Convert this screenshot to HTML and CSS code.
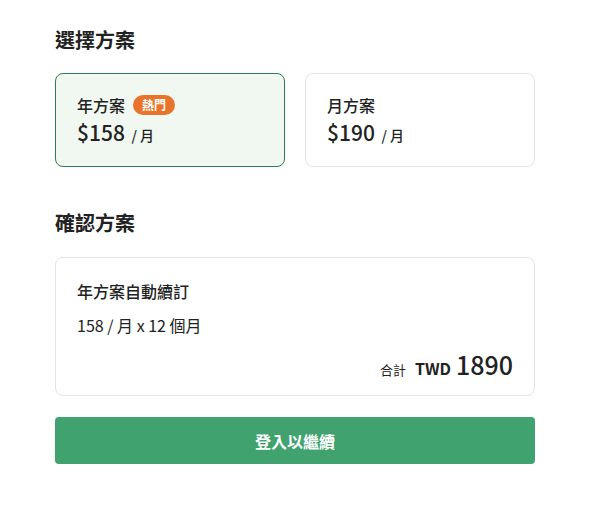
FILE: index.html
```html
<!DOCTYPE html>
<html lang="zh-Hant">
<head>
<meta charset="utf-8">
<link rel="stylesheet" href="styles.css">
</head>
<body>
<main class="page">
  <h2 class="section-title">選擇方案</h2>
  <div class="plans">
    <div class="plan selected">
      <div class="plan-name">年方案 <span class="badge">熱門</span></div>
      <div class="plan-price"><span class="amount">$158</span> <span class="unit">/ 月</span></div>
    </div>
    <div class="plan">
      <div class="plan-name">月方案</div>
      <div class="plan-price"><span class="amount">$190</span> <span class="unit">/ 月</span></div>
    </div>
  </div>

  <h2 class="section-title second">確認方案</h2>
  <div class="summary">
    <div class="summary-title">年方案自動續訂</div>
    <div class="summary-detail">158 / 月 x 12 個月</div>
    <div class="summary-total">
      <span class="total-label">合計</span>
      <span class="currency">TWD</span>
      <span class="total-amount">1890</span>
    </div>
  </div>

  <button class="cta">登入以繼續</button>
</main>
</body>
</html>
```
FILE: styles.css
```css
* { box-sizing: border-box; }
html, body { margin: 0; padding: 0; background: #fff; }
body {
  font-family: "Noto Sans CJK TC", "Noto Sans", sans-serif;
  color: #222;
}
.page {
  width: 480px;
  margin: 0 0 0 55px;
  padding-top: 26px;
}
.section-title {
  margin: 0;
  font-size: 20px;
  font-weight: 700;
  line-height: 28px;
  color: #222;
}
.section-title.second { margin-top: 42px; }
.plans {
  display: grid;
  grid-template-columns: 1fr 1fr;
  gap: 20px;
  margin-top: 19px;
}
.plan {
  height: 94px;
  border: 1px solid #e3e3e3;
  border-radius: 8px;
  padding: 19px 21px 0;
  background: #fff;
}
.plan.selected {
  border-color: #2f7a57;
  background: #f1f8f1;
}
.plan-name {
  display: flex;
  align-items: center;
  gap: 8px;
  font-size: 16px;
  font-weight: 500;
  line-height: 24px;
  height: 24px;
}
.badge {
  display: inline-block;
  background: #e8732a;
  color: #fff;
  font-size: 12px;
  font-weight: 700;
  line-height: 20px;
  padding: 0 9px;
  border-radius: 10px;
}
.plan-price {
  margin-top: 1px;
  line-height: 28px;
}
.amount {
  font-size: 21px;
  font-weight: 500;
}
.unit {
  font-size: 14px;
  font-weight: 500;
  margin-left: 3px;
}
.summary {
  margin-top: 20px;
  height: 139px;
  border: 1px solid #e3e3e3;
  border-radius: 8px;
  padding: 21px 21px 0;
}
.summary-title {
  font-size: 16px;
  font-weight: 500;
  line-height: 24px;
}
.summary-detail {
  margin-top: 10px;
  font-size: 16px;
  font-weight: 400;
  line-height: 24px;
}
.summary-total {
  display: flex;
  justify-content: flex-end;
  align-items: baseline;
  margin-top: 9px;
  line-height: 36px;
}
.total-label { font-size: 13px; font-weight: 400; }
.currency { font-size: 16px; font-weight: 700; margin-left: 9px; }
.total-amount { font-size: 25px; font-weight: 500; margin-left: 5px; }
.cta {
  display: block;
  width: 100%;
  margin-top: 21px;
  height: 47px;
  border: 0;
  border-radius: 4px;
  background: #3fa26f;
  color: #fff;
  font-family: inherit;
  font-size: 16px;
  font-weight: 700;
}
```
